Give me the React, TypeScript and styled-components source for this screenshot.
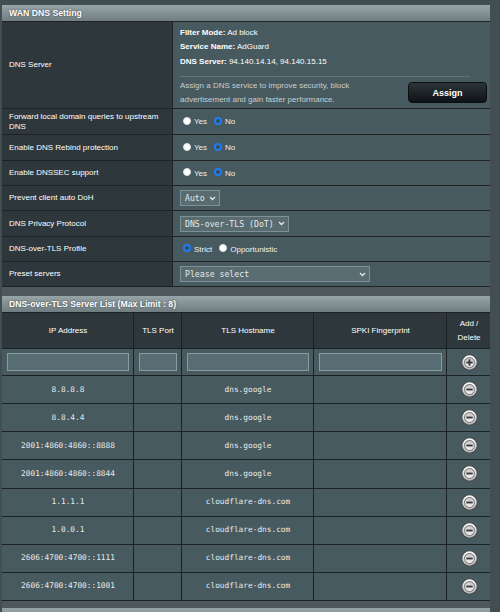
import React from 'react';
import styled, {createGlobalStyle} from 'styled-components';

const GlobalStyle = createGlobalStyle`
	body{
		margin:0;
		background:#434e52;
		font-family:"Liberation Sans", Arial, sans-serif;
		color:#fff;
	}
`;

const Panel = styled.div`
	margin:5px 0 0 2px;
	width:488px;
	background:#4d595d;
`;

const Header = styled.div<{$top?:number}>`
	box-sizing:border-box;
	height:17px;
	margin-top:${p=>p.$top || 0}px;
	padding-left:7px;
	display:flex;
	align-items:center;
	background:linear-gradient(#97a4a8, #6f7d81);
	border-bottom:1px solid #222;
	font-size:8.7px;
	font-weight:bold;
	color:#fff;
	text-shadow:0 0 2px rgba(0,0,0,.6);
`;

const FormRow = styled.div<{$h:number}>`
	box-sizing:border-box;
	display:grid;
	grid-template-columns:171px 1fr;
	height:${p=>p.$h}px;
	border-bottom:1px solid #222;
`;

const Label = styled.div`
	display:flex;
	align-items:center;
	padding:0 7px;
	background:#2e383c;
	border-right:1px solid #222;
	font-size:8px;
	line-height:10px;
	color:#fff;
`;

const Value = styled.div`
	display:flex;
	align-items:center;
	gap:4px;
	padding:0 7px;
	background:#475a5f;
	font-size:8px;
	color:#fff;
`;

const ServerValue = styled(Value)`
	flex-direction:column;
	align-items:stretch;
	gap:0;
	padding:3.5px 3px 0 7px;
`;

const InfoLine = styled.div`
	line-height:14.5px;
	font-size:8px;
	> b{font-weight:bold;}
`;

const Divider = styled.div`
	height:1px;
	margin:7px 17px 0 0;
	background:#627479;
`;

const AssignRow = styled.div`
	display:flex;
	align-items:center;
	justify-content:space-between;
	margin-top:2px;
`;

const Hint = styled.div`
	font-size:8px;
	line-height:13.5px;
	color:#c6cfd1;
`;

const AssignButton = styled.button`
	width:79px;
	height:21px;
	border:1px solid #0b0f11;
	border-radius:4px;
	background:linear-gradient(#2c3438, #0e1315);
	color:#fff;
	font-family:"Liberation Sans", Arial, sans-serif;
	font-size:9px;
	font-weight:bold;
`;

const RadioLabel = styled.label`
	display:flex;
	align-items:center;
	gap:3px;
	padding-left:3px;
	font-size:8px;
	color:#eef1f2;
`;

const Dot = styled.span<{$on?:boolean}>`
	box-sizing:border-box;
	width:8px;
	height:8px;
	border-radius:50%;
	background:${p=>p.$on ? '#3b4b50' : '#fff'};
	border:${p=>p.$on ? '2px solid #1f7cf3' : '1px solid #dfe3e4'};
	margin-top:-2px;
`;

const SelectBox = styled.div<{$w?:number}>`
	box-sizing:border-box;
	display:flex;
	align-items:center;
	justify-content:space-between;
	gap:4px;
	height:16px;
	width:${p=>p.$w ? p.$w + 'px' : 'auto'};
	padding:0 3px 0 4px;
	background:#596c71;
	border:1px solid #7f9095;
	font-family:"DejaVu Sans Mono", monospace;
	font-size:8.2px;
	color:#e6e9ea;
`;

const ListGrid = styled.div`
	display:grid;
	grid-template-columns:132px 48px 132px 133px 43px;
`;

const Cell = styled.div<{$h:number; $dark?:boolean; $last?:boolean}>`
	box-sizing:border-box;
	height:${p=>p.$h}px;
	display:flex;
	align-items:center;
	justify-content:center;
	padding:0 4px 0 5px;
	background:${p=>p.$dark ? '#2e383c' : '#475a5f'};
	border-bottom:1px solid #1c2224;
	border-right:${p=>p.$last ? 'none' : '1px solid #1c2224'};
	text-align:center;
	font-size:8px;
	line-height:14px;
	color:#fff;
`;

const MonoText = styled.span`
	font-family:"DejaVu Sans Mono", monospace;
	font-size:7.8px;
	color:#e8ebec;
`;

const TextInput = styled.div`
	box-sizing:border-box;
	width:100%;
	height:18px;
	background:#576d73;
	border:1px solid #8b9ca0;
`;

function Chevron() {
	return (
		<svg width="7" height="5" viewBox="0 0 7 5">
			<path d="M1 1 L3.5 3.5 L6 1" fill="none" stroke="#e6e9ea" strokeWidth="1.3"/>
		</svg>
	);
}

function RoundIcon({plus}:{plus?:boolean}) {
	const id = plus ? 'p' : 'm';
	return (
		<svg width="17" height="17" viewBox="-8.5 -8.5 17 17">
			<defs>
				<linearGradient id={'o' + id} x1="0" y1="0" x2="0" y2="1">
					<stop offset="0" stopColor="#ffffff"/>
					<stop offset="1" stopColor="#b4b4b4"/>
				</linearGradient>
				<linearGradient id={'i' + id} x1="0" y1="0" x2="0" y2="1">
					<stop offset="0" stopColor="#c4c4c4"/>
					<stop offset="1" stopColor="#f2f2f2"/>
				</linearGradient>
			</defs>
			<circle r="8.2" fill="#4a4a4a"/>
			<circle r="7.2" fill={`url(#o${id})`}/>
			<circle r="5" fill={`url(#i${id})`} stroke="#6a6a6a" strokeWidth="0.9"/>
			<rect x="-3.2" y="-0.9" width="6.4" height="1.8" fill="#3a3a3a"/>
			{plus && <rect x="-0.9" y="-3.2" width="1.8" height="6.4" fill="#3a3a3a"/>}
		</svg>
	);
}

function YesNo() {
	return (
		<Value>
			<RadioLabel><Dot/>Yes</RadioLabel>
			<RadioLabel><Dot $on/>No</RadioLabel>
		</Value>
	);
}

const servers = [
	['8.8.8.8', 'dns.google'],
	['8.8.4.4', 'dns.google'],
	['2001:4860:4860::8888', 'dns.google'],
	['2001:4860:4860::8844', 'dns.google'],
	['1.1.1.1', 'cloudflare-dns.com'],
	['1.0.0.1', 'cloudflare-dns.com'],
	['2606:4700:4700::1111', 'cloudflare-dns.com'],
	['2606:4700:4700::1001', 'cloudflare-dns.com'],
];

export default function App() {
	return (
		<>
			<GlobalStyle/>
			<Panel>
				<Header>WAN DNS Setting</Header>
				<FormRow $h={87}>
					<Label>DNS Server</Label>
					<ServerValue>
						<InfoLine><b>Filter Mode:</b> Ad block</InfoLine>
						<InfoLine><b>Service Name:</b> AdGuard</InfoLine>
						<InfoLine><b>DNS Server:</b> 94.140.14.14, 94.140.15.15</InfoLine>
						<Divider/>
						<AssignRow>
							<Hint>Assign a DNS service to improve security, block<br/>advertisement and gain faster performance.</Hint>
							<AssignButton>Assign</AssignButton>
						</AssignRow>
					</ServerValue>
				</FormRow>
				<FormRow $h={26}>
					<Label>Forward local domain queries to upstream<br/>DNS</Label>
					<YesNo/>
				</FormRow>
				<FormRow $h={26}>
					<Label>Enable DNS Rebind protection</Label>
					<YesNo/>
				</FormRow>
				<FormRow $h={25}>
					<Label>Enable DNSSEC support</Label>
					<YesNo/>
				</FormRow>
				<FormRow $h={25}>
					<Label>Prevent client auto DoH</Label>
					<Value><SelectBox>Auto<Chevron/></SelectBox></Value>
				</FormRow>
				<FormRow $h={26}>
					<Label>DNS Privacy Protocol</Label>
					<Value><SelectBox>DNS-over-TLS (DoT)<Chevron/></SelectBox></Value>
				</FormRow>
				<FormRow $h={25}>
					<Label>DNS-over-TLS Profile</Label>
					<Value>
						<RadioLabel><Dot $on/>Strict</RadioLabel>
						<RadioLabel><Dot/>Opportunistic</RadioLabel>
					</Value>
				</FormRow>
				<FormRow $h={25}>
					<Label>Preset servers</Label>
					<Value><SelectBox $w={190}>Please select<Chevron/></SelectBox></Value>
				</FormRow>

				<Header $top={9}>DNS-over-TLS Server List (Max Limit : 8)</Header>
				<ListGrid>
					<Cell $h={36} $dark>IP Address</Cell>
					<Cell $h={36} $dark>TLS Port</Cell>
					<Cell $h={36} $dark>TLS Hostname</Cell>
					<Cell $h={36} $dark>SPKI Fingerprint</Cell>
					<Cell $h={36} $dark $last>Add /<br/>Delete</Cell>

					<Cell $h={27}><TextInput/></Cell>
					<Cell $h={27}><TextInput/></Cell>
					<Cell $h={27}><TextInput/></Cell>
					<Cell $h={27}><TextInput/></Cell>
					<Cell $h={27} $last><RoundIcon plus/></Cell>

					{servers.map(([ip, host])=>
						<React.Fragment key={ip}>
							<Cell $h={28.125}><MonoText>{ip}</MonoText></Cell>
							<Cell $h={28.125}/>
							<Cell $h={28.125}><MonoText>{host}</MonoText></Cell>
							<Cell $h={28.125}/>
							<Cell $h={28.125} $last><RoundIcon/></Cell>
						</React.Fragment>
					)}
				</ListGrid>
				<Header $top={7}/>
			</Panel>
		</>
	);
}
